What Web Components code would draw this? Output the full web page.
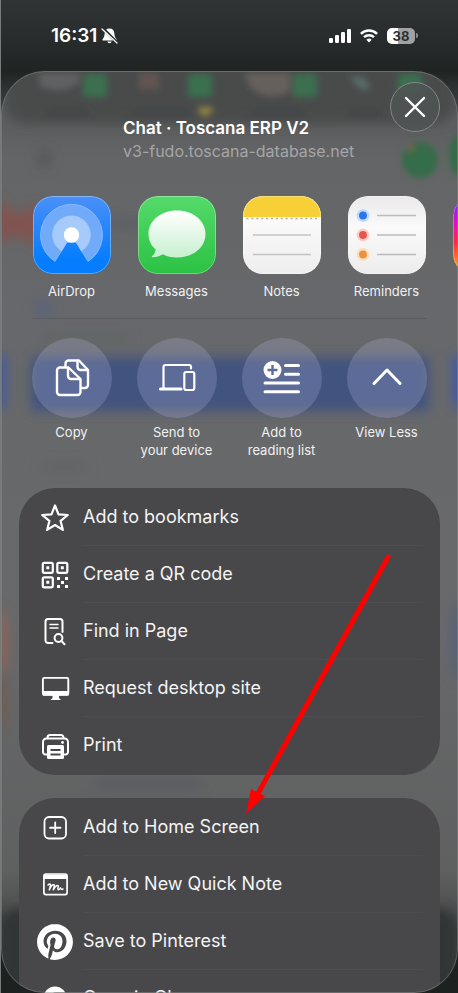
<!DOCTYPE html>
<html lang="en">
<head>
<meta charset="utf-8">
<meta name="viewport" content="width=device-width, initial-scale=1">
<title>Share</title>
<style>
    body {
        margin: 0;
        background: #202524;
        font-family: Inter, Roboto, "Liberation Sans", sans-serif;
        color: #fff;
    }
</style>
</head>
<body>
<phone-screen>
    <status-bar slot="status" time="16:31" battery="38"></status-bar>
    <share-sheet>
        <share-header slot="header" heading="Chat · Toscana ERP V2" address="v3-fudo.toscana-database.net"></share-header>
        <share-row slot="apps">
            <app-tile icon="airdrop">AirDrop</app-tile>
            <app-tile icon="messages">Messages</app-tile>
            <app-tile icon="notes">Notes</app-tile>
            <app-tile icon="reminders">Reminders</app-tile>
            <app-tile icon="camera"></app-tile>
        </share-row>
        <share-row slot="actions">
            <action-button icon="copy">Copy</action-button>
            <action-button icon="devices">Send to<br>your device</action-button>
            <action-button icon="reading">Add to<br>reading list</action-button>
            <action-button icon="chevron">View Less</action-button>
        </share-row>
        <menu-group>
            <menu-item icon="star">Add to bookmarks</menu-item>
            <menu-item icon="qr">Create a QR code</menu-item>
            <menu-item icon="find">Find in Page</menu-item>
            <menu-item icon="desktop">Request desktop site</menu-item>
            <menu-item icon="print">Print</menu-item>
        </menu-group>
        <menu-group>
            <menu-item icon="plus">Add to Home Screen</menu-item>
            <menu-item icon="quicknote">Add to New Quick Note</menu-item>
            <menu-item icon="pinterest">Save to Pinterest</menu-item>
            <menu-item icon="chrome">Open in Chrome</menu-item>
        </menu-group>
    </share-sheet>
    <pointer-arrow slot="overlay"></pointer-arrow>
</phone-screen>

<script>
const ICONS = {
    // menu icons, 40 x 40
    star: [40, `<path d="M20 7.500l3.500 8.800 9.300.7-7.200 5.900 2.300 9-7.900-4.900-7.900 4.900 2.300-9-7.200-5.900 9.300-.7z" fill="none" stroke="#fff" stroke-width="2.200" stroke-linejoin="round"/>`],
    qr: [40, `<g fill="none" stroke="#fff" stroke-width="2.200"><rect x="7.800" y="7.800" width="10" height="10" rx="1.500"/><rect x="22.300" y="7.800" width="10" height="10" rx="1.500"/><rect x="7.800" y="22.300" width="10" height="10" rx="1.500"/></g><path d="M11.300 11.300h3v3h-3zM25.800 11.300h3v3h-3zM11.300 25.800h3v3h-3zM22 22h3v3h-3zM30 22h3v3h-3zM26 26h3v3h-3zM22 30h3v3h-3zM30 30h3v3h-3z" fill="#fff"/>`],
    find: [40, `<g fill="none" stroke="#fff" stroke-width="2" stroke-linecap="round"><path d="M17.500 31H13a2.500 2.500 0 0 1-2.500-2.500V9.500A2.500 2.500 0 0 1 13 7h12a2.500 2.500 0 0 1 2.500 2.500V20"/><path d="M15 12.500h8M15 16h8" stroke-width="1.500"/><circle cx="23.500" cy="26" r="3.900"/><path d="M26.500 29l3 3.200"/></g>`],
    desktop: [40, `<rect x="7.900" y="8.900" width="25.400" height="17" rx="1.500" fill="none" stroke="#fff" stroke-width="1.900"/><path d="M8 22h25.500v4.500H8zM17.500 26h6.500v3l2 2h-10.500l2-2z" fill="#fff"/>`],
    print: [40, `<g fill="none" stroke="#fff" stroke-width="2"><path d="M12.500 12.500v-1a2.500 2.500 0 0 1 2.500-2.500h11a2.500 2.500 0 0 1 2.500 2.500v1"/><path d="M12.500 28.500H10.500a2.500 2.500 0 0 1-2.500-2.500V16a3.500 3.500 0 0 1 3.500-3.500h18A3.500 3.500 0 0 1 33 16v10a2.500 2.500 0 0 1-2.500 2.500h-2"/></g><rect x="12" y="19" width="17" height="14" rx="1.500" fill="#fff"/><path d="M15.500 24h10M15.500 28.500h10" stroke="#48484a" stroke-width="1.800"/><circle cx="27.500" cy="16.500" r="1.400" fill="#fff"/>`],
    plus: [40, `<g fill="none" stroke="#fff" stroke-width="1.800" stroke-linecap="round"><rect x="9.500" y="9" width="21.500" height="21.500" rx="4.500"/><path d="M20.200 14.500v10.500M15 19.750h10.500"/></g>`],
    quicknote: [40, `<rect x="8.900" y="9" width="23.200" height="20.600" rx="2" fill="none" stroke="#fff" stroke-width="1.700"/><path d="M9 9.500h23v4.500H9z" fill="#fff"/><path d="M13 20c1.500-1.500 2.800-1.500 2.500.2L14.300 25c1-2.600 3.200-5.400 4.600-5.200 1.300.2-.5 3.400-.6 5 1.400-2.700 3.300-4.600 4.500-4.400 1.400.2-.7 3.400.3 4.300.9.500 1.700-.9 2.300-1.900.3 1.400 1 1.900 2.600 1.200" fill="none" stroke="#fff" stroke-width="1.500" stroke-linecap="round" stroke-linejoin="round"/>`],
    pinterest: [40, `<path transform="translate(2 2) scale(1.500)" fill="#fff" d="M12.017 0C5.396 0 .029 5.367.029 11.987c0 5.079 3.158 9.417 7.618 11.162-.105-.949-.199-2.403.041-3.439.219-.937 1.406-5.957 1.406-5.957s-.359-.72-.359-1.781c0-1.663.967-2.911 2.168-2.911 1.024 0 1.518.769 1.518 1.688 0 1.029-.653 2.567-.992 3.992-.285 1.193.6 2.165 1.775 2.165 2.128 0 3.768-2.245 3.768-5.487 0-2.861-2.063-4.869-5.008-4.869-3.41 0-5.409 2.562-5.409 5.199 0 1.033.394 2.143.889 2.741.099.12.112.225.085.345-.09.375-.293 1.199-.334 1.363-.053.225-.172.271-.401.165-1.495-.69-2.433-2.878-2.433-4.646 0-3.776 2.748-7.252 7.92-7.252 4.158 0 7.392 2.967 7.392 6.923 0 4.135-2.607 7.462-6.233 7.462-1.214 0-2.354-.629-2.758-1.379l-.749 2.848c-.269 1.045-1.004 2.352-1.498 3.146 1.123.345 2.306.535 3.55.535 6.607 0 11.985-5.365 11.985-11.987C23.97 5.39 18.592.026 11.985.026z"/>`],
    chrome: [40, `<circle cx="20" cy="19" r="11.500" fill="#fff"/><path d="M31 14.500H20a5 5 0 0 0-5 5" fill="none" stroke="#48484a" stroke-width="1.800"/>`],

    // round action icons, 80 x 80
    copy: [80, `<g fill="none" stroke="#fff" stroke-width="2.400" stroke-linejoin="round" stroke-linecap="round"><path d="M33.500 28v-2.500a3 3 0 0 1 3-3H47l9 9.500v15a3 3 0 0 1-3 3H50"/><path d="M45.500 23v6a3 3 0 0 0 3 3h7"/><path d="M36.500 29.500H28a3 3 0 0 0-3 3V54a3 3 0 0 0 3 3h17.500a3 3 0 0 0 3-3V41z"/><path d="M36 30v8a3 3 0 0 0 3 3h9"/></g>`],
    devices: [80, `<g fill="none" stroke="#fff" stroke-width="2.200"><path d="M26.500 50V29a2 2 0 0 1 2-2H52a2 2 0 0 1 2 2v1.500" stroke-linecap="round"/><rect x="47.300" y="34" width="10" height="18" rx="2"/></g><path d="M23.500 51H44" stroke="#fff" stroke-width="3.200" stroke-linecap="round"/>`],
    reading: [80, `<circle cx="30.500" cy="32" r="9" fill="#fff"/><path d="M30.500 27v10M25.500 32h10" stroke="#5f6c95" stroke-width="2.400"/><path d="M43.500 27.500h13M43.500 36.200h13M23 45h33.500M23 53.700h33.500" stroke="#fff" stroke-width="3" stroke-linecap="round"/>`],
    chevron: [80, `<path d="M27 45.500L40 32l13 13.500" fill="none" stroke="#fff" stroke-width="3" stroke-linecap="round" stroke-linejoin="round"/>`],

    // app tiles, 78 x 78
    airdrop: [78, `<defs><linearGradient id="a" x2="0" y2="1"><stop stop-color="#4a90f7"/><stop offset=".8" stop-color="#067dff"/></linearGradient></defs>
        <rect width="78" height="78" fill="url(#a)"/>
        <g stroke="#a6cbff" stroke-width=".6"><path d="M22 65.500A31 31 0 1 1 55 65.500L43 46h-9z" fill="#71aaf8"/>
        <path d="M28.500 55A19 19 0 1 1 48.500 55L43 46h-9z" fill="#a6cafa"/></g><circle cx="38.500" cy="39" r="7.700" fill="#fff"/>`],
    messages: [78, `<defs><linearGradient id="b" x2="0" y2="1"><stop stop-color="#55da6b"/><stop offset="1" stop-color="#2bc244"/></linearGradient><linearGradient id="c" x2="0" y2="1"><stop stop-color="#fff"/><stop offset="1" stop-color="#c8f0cf"/></linearGradient></defs>
        <rect width="78" height="78" fill="url(#b)"/>
        <path d="M39 14.500c16 0 28.500 10 28.500 23.500S55 61.500 39 61.500c-6 0-10-1-14-3.200-3.500 2-7 2.900-10.500 2.900-1 0-1-.6-.3-1.200 2.500-2.200 3.300-4.600 3.400-6.600C13 49.500 10.500 44 10.500 38 10.500 24.500 23 14.500 39 14.500z" fill="url(#c)"/>`],
    notes: [78, `<defs><linearGradient id="d" x2="0" y2="1"><stop stop-color="#fff"/><stop offset="1" stop-color="#eeeeef"/></linearGradient></defs>
        <rect width="78" height="78" fill="url(#d)"/><path d="M0 0h78v21H0z" fill="#f7d038"/>
        <path d="M3.500 22.500h73" stroke="#b5aa8c" stroke-width="1.600" stroke-dasharray="2 2.900"/>
        <path d="M10 39h58M10 58.500h58" stroke="#c3c3c5" stroke-width="1.300"/>`],
    reminders: [78, `<defs><linearGradient id="e" x2="0" y2="1"><stop stop-color="#e9e9ea"/><stop offset=".4" stop-color="#fafafa"/><stop offset="1" stop-color="#ececed"/></linearGradient></defs>
        <rect width="78" height="78" fill="url(#e)"/>
        <g stroke-width="2.500"><circle cx="15" cy="19.500" r="5.200" fill="#2f75e9" stroke="#bcdcff"/><circle cx="15" cy="39" r="5.200" fill="#e7564a" stroke="#fbd0ca"/><circle cx="15" cy="58.500" r="5.200" fill="#ea9142" stroke="#fbdfbd"/></g>
        <path d="M29 19.500h39M29 39h39M29 58.500h39" stroke="#bcbcbe" stroke-width="1.300"/>`],
    camera: [78, `<defs><linearGradient id="f" x2="0" y2="1"><stop offset=".1" stop-color="#7a2cf0"/><stop offset=".35" stop-color="#e70bc4"/><stop offset=".6" stop-color="#ff2a3c"/><stop offset=".9" stop-color="#ff9a10"/></linearGradient></defs>
        <rect width="78" height="78" fill="url(#f)"/>`]
};

class ShadowElement extends HTMLElement {
    connectedCallback() {
        if (!this.shadowRoot) {
            this.attachShadow({ mode: 'open' });
        }
        const template = document.createElement('template');
        template.innerHTML = this.template();
        this.shadowRoot.replaceChildren(template.content.cloneNode(true));
    }
}

class UiIcon extends ShadowElement {
    template() {
        const [size, body] = ICONS[this.getAttribute('name')];
        return `
            <style>
                :host { display: block; flex: none; }
                svg { display: block; }
            </style>
            <svg width="${size}" height="${size}" viewBox="0 0 ${size} ${size}" aria-hidden="true">${body}</svg>
        `;
    }
}

class PhoneScreen extends ShadowElement {
    template() {
        return `
            <style>
                :host {
                    display: flex;
                    flex-direction: column;
                    position: relative;
                    height: 100vh;
                    overflow: hidden;
                    box-sizing: border-box;
                    border-left: 1px solid #777b7c;
                    background: linear-gradient(#303435, #202524 71px, #565a5b 140px, #6a6c6d 400px, #5a5c5d 890px, #1d2221 940px);
                }
            </style>
            <slot name="status"></slot>
            <slot></slot>
            <slot name="overlay"></slot>
        `;
    }
}

class StatusBar extends ShadowElement {
    template() {
        return `
            <style>
                :host {
                    display: flex;
                    align-items: center;
                    flex: none;
                    height: 71px;
                    padding: 0 40px 0 50px;
                    box-sizing: border-box;
                    background: linear-gradient(#303435, #202524);
                }
                .time { font-size: 19px; font-weight: 600; line-height: 24px; }
                .bell { margin-left: 4px; flex: 1; }
                svg { display: block; }
                .right { display: flex; align-items: center; gap: 9px; }
                .battery { display: flex; align-items: center; gap: 1px; }
                .level {
                    width: 28px;
                    border-radius: 5px;
                    background: linear-gradient(90deg, #fff 38%, #a0a2a3 38%);
                    color: #2b2f30;
                    font-size: 13px;
                    font-weight: 700;
                    line-height: 16px;
                    text-align: center;
                }
                .nub { width: 2px; height: 5px; border-radius: 0 2px 2px 0; background: #8b8e8f; }
            </style>
            <span class="time">${this.getAttribute('time')}</span>
            <span class="bell">
                <svg width="18" height="18" viewBox="0 0 18 18">
                    <path d="M8.500 1.500c3 0 4.600 2 4.800 4.600.2 3 .6 4.500 2.200 6.200v1.200H1.500v-1.200c1.600-1.700 2-3.200 2.200-6.200C3.900 3.500 5.500 1.500 8.500 1.500zM6.300 14.500h4.400a2.300 2.300 0 0 1-4.400 0z" fill="#fff"/>
                    <path d="M2 1.500l14.500 14.500" stroke="#262b2b" stroke-width="3"/>
                    <path d="M1 2l15 14" stroke="#fff" stroke-width="1.300" stroke-linecap="round"/>
                </svg>
            </span>
            <div class="right">
                <svg width="22" height="16" viewBox="0 0 22 16" fill="#fff">
                    <rect y="10" width="4" height="5" rx="1.200"/><rect x="6" y="7" width="4" height="8" rx="1.200"/>
                    <rect x="12" y="4" width="4" height="11" rx="1.200"/><rect x="18" y="1" width="4" height="14" rx="1.200"/>
                </svg>
                <svg width="18" height="16" viewBox="0 0 18 16" fill="none" stroke="#fff" stroke-width="2.400">
                    <path d="M.9 5.800a11.600 11.600 0 0 1 16.200 0M4 9.200a7.200 7.200 0 0 1 10 0"/>
                    <path d="M9 14.500l-2.600-2.700a3.700 3.700 0 0 1 5.200 0z" fill="#fff" stroke="none"/>
                </svg>
                <div class="battery"><span class="level">${this.getAttribute('battery')}</span><span class="nub"></span></div>
            </div>
        `;
    }
}

// Page content that shines through the translucent sheet
class SheetBackdrop extends ShadowElement {
    template() {
        return `
            <style>
                :host { display: block; position: absolute; inset: 0; overflow: hidden; }
                svg { display: block; }
            </style>
            <svg width="100%" height="100%" aria-hidden="true">
                <defs>
                    <filter id="soft" x="-30%" y="-30%" width="160%" height="160%"><feGaussianBlur stdDeviation="6"/></filter>
                    <filter id="light" x="-30%" y="-30%" width="160%" height="160%"><feGaussianBlur stdDeviation="3"/></filter>
                </defs>
                <g filter="url(#soft)">
                    <rect x="4" y="-40" width="450" height="93" rx="22" fill="#494b4b"/>
                    <rect x="30" y="286" width="398" height="54" fill="#43537f"/>
                    <rect x="-10" y="284" width="14" height="52" fill="#4058a8"/>
                    <rect x="452" y="284" width="20" height="52" fill="#4058a8"/>
                    <path d="M-6 126l22 18 22-12v44l-22-12-22 8z" fill="#82534f"/>
                    <circle cx="42" cy="238" r="9" fill="#5b647a"/>
                    <circle cx="43" cy="88" r="8" fill="#55575c"/>
                    <ellipse cx="130" cy="152" rx="30" ry="5" fill="#5c5f63"/>
                    <rect x="40" y="264" width="90" height="6" fill="#606364"/>
                    <rect x="40" y="392" width="46" height="8" fill="#616364"/>
                    <rect x="95" y="708" width="105" height="10" fill="#5a5c62"/>
                    <ellipse cx="0" cy="570" rx="4" ry="34" fill="#a4604d"/>
                    <ellipse cx="0" cy="630" rx="4" ry="26" fill="#7d5445"/>
                    <ellipse cx="456" cy="570" rx="6" ry="40" fill="#566077"/>
                    <rect x="-4" y="836" width="462" height="120" rx="22" fill="#323635"/>
                </g>
                <g filter="url(#light)">
                    <path d="M38 2h40v10q-20 14-40 2z" fill="#5e6062"/>
                    <rect x="82" y="3" width="24" height="23" rx="3" fill="#3a7050"/>
                    <rect x="138" y="2" width="20" height="16" fill="#625452"/>
                    <rect x="187" y="3" width="24" height="23" rx="3" fill="#3a7050"/>
                    <path d="M243 2h46v18q-22 12-40-4z" fill="#66605b"/>
                    <rect x="292" y="3" width="24" height="23" rx="3" fill="#3a7050"/>
                    <path d="M348 6h14l8 12h-10z" fill="#58706a"/>
                    <rect x="397" y="3" width="24" height="21" rx="3" fill="#3a7050"/>
                    <path d="M197 37q4-3 7 0 4-3 8 0 0 5-8 9-7-4-7-9z" fill="#948640"/>
                    <path d="M44 42h44M130 42h60M250 42h56M347 42h34" stroke="#434545" stroke-width="6"/>
                    <circle cx="419" cy="89" r="18" fill="#346c49"/>
                    <ellipse cx="457" cy="84" rx="9" ry="20" fill="#346c49"/>
                    <circle cx="410" cy="77" r="3" fill="#80613d"/>
                </g>
            </svg>
        `;
    }
}

class ShareSheet extends ShadowElement {
    template() {
        return `
            <style>
                :host {
                    display: flex;
                    flex-direction: column;
                    flex: 1;
                    min-height: 0;
                    position: relative;
                    overflow: hidden;
                    border-radius: 44px;
                    background: linear-gradient(#515354, #646566 90px, #66686b 240px, #67696a 560px, #5f6060 800px, #454848 860px);
                }
                .content { position: relative; }
                .rule { height: 1px; margin: 18px 31px 19px; background: #5a5c5f; }
                .groups { display: flex; flex-direction: column; gap: 23px; margin: 29px 18px 0; }
                .edge {
                    position: absolute;
                    inset: 0;
                    border: 1px solid #8a8d8e80;
                    border-radius: 44px;
                    pointer-events: none;
                }
            </style>
            <sheet-backdrop></sheet-backdrop>
            <div class="content">
                <slot name="header"></slot>
                <slot name="apps"></slot>
                <div class="rule"></div>
                <slot name="actions"></slot>
                <div class="groups"><slot></slot></div>
            </div>
            <div class="edge"></div>
        `;
    }
}

class ShareHeader extends ShadowElement {
    template() {
        return `
            <style>
                :host {
                    display: flex;
                    align-items: flex-start;
                    justify-content: space-between;
                    height: 125px;
                    padding: 11px 18px 0 122px;
                    box-sizing: border-box;
                    white-space: nowrap;
                }
                .titles { padding-top: 35px; flex: 1; width: 0; }
                h1 { margin: 0; font-size: 17px; font-weight: 600; line-height: 23px; }
                p { margin: 0; font-size: 16px; line-height: 23px; color: #a5a6a8; }
                button {
                    width: 50px;
                    height: 50px;
                    flex: none;
                    padding: 0;
                    border: 1px solid #858889;
                    border-radius: 50%;
                    background: #505355d9;
                }
                svg { display: block; margin: auto; }
            </style>
            <div class="titles">
                <h1>${this.getAttribute('heading')}</h1>
                <p>${this.getAttribute('address')}</p>
            </div>
            <button type="button" aria-label="Close">
                <svg width="22" height="22" viewBox="0 0 22 22"><path d="M2 2l18 18M20 2L2 20" stroke="#fff" stroke-width="2.400" stroke-linecap="round"/></svg>
            </button>
        `;
    }
}

class ShareRow extends ShadowElement {
    template() {
        return `
            <style>
                :host {
                    display: flex;
                    align-items: flex-start;
                    padding-left: 18px;
                    overflow: hidden;
                }
            </style>
            <slot></slot>
        `;
    }
}

class AppTile extends ShadowElement {
    template() {
        return `
            <style>
                :host { display: block; flex: none; width: 105px; }
                button {
                    display: flex;
                    flex-direction: column;
                    align-items: center;
                    gap: 8px;
                    width: 100%;
                    padding: 0;
                    border: 0;
                    background: none;
                    color: #f1f1f2;
                    font: inherit;
                    font-size: 13px;
                    line-height: 18px;
                }
                .tile { position: relative; border-radius: 20px; overflow: hidden; }
                .tile::after {
                    content: "";
                    position: absolute;
                    inset: 0;
                    border: 1px solid #ffffff55;
                    border-radius: 20px;
                }
            </style>
            <button type="button">
                <span class="tile"><ui-icon name="${this.getAttribute('icon')}"></ui-icon></span>
                <slot></slot>
            </button>
        `;
    }
}

class ActionButton extends ShadowElement {
    template() {
        return `
            <style>
                :host { display: block; flex: none; width: 105px; }
                button {
                    display: flex;
                    flex-direction: column;
                    align-items: center;
                    gap: 5px;
                    width: 100%;
                    padding: 0;
                    border: 0;
                    background: none;
                    color: #f1f1f2;
                    font: inherit;
                    font-size: 13px;
                    line-height: 18px;
                }
                .disc { border-radius: 50%; background: #ced6ff30; }
            </style>
            <button type="button">
                <span class="disc"><ui-icon name="${this.getAttribute('icon')}"></ui-icon></span>
                <span><slot></slot></span>
            </button>
        `;
    }
}

class MenuGroup extends ShadowElement {
    template() {
        return `
            <style>
                :host {
                    display: block;
                    padding: 1px 0;
                    border-radius: 36px;
                    background: #48484a;
                }
            </style>
            <slot></slot>
        `;
    }
}

class MenuItem extends ShadowElement {
    template() {
        return `
            <style>
                :host { display: block; --line: #4e4e50; }
                :host(:last-child) { --line: transparent; }
                button {
                    display: flex;
                    align-items: center;
                    gap: 8px;
                    width: 100%;
                    height: 57px;
                    padding: 0 17px 0 16px;
                    border: 0;
                    background: none;
                    color: #f4f4f5;
                    font: inherit;
                    font-size: 18px;
                    text-align: left;
                    white-space: nowrap;
                }
                .label {
                    flex: 1;
                    line-height: 56px;
                    border-bottom: 1px solid var(--line);
                }
            </style>
            <button type="button">
                <ui-icon name="${this.getAttribute('icon')}"></ui-icon>
                <span class="label"><slot></slot></span>
            </button>
        `;
    }
}

class PointerArrow extends ShadowElement {
    template() {
        return `
            <style>
                :host { position: absolute; left: 244px; top: 552px; pointer-events: none; }
                svg { display: block; }
            </style>
            <svg width="150" height="264" viewBox="0 0 150 264" aria-hidden="true">
                <path d="M143 5L10 247" stroke="#f00" stroke-width="5" stroke-linecap="round"/>
                <path d="M1 262L6 237l14 7z" fill="#f00"/>
            </svg>
        `;
    }
}

customElements.define('ui-icon', UiIcon);
customElements.define('sheet-backdrop', SheetBackdrop);
customElements.define('phone-screen', PhoneScreen);
customElements.define('status-bar', StatusBar);
customElements.define('share-sheet', ShareSheet);
customElements.define('share-header', ShareHeader);
customElements.define('share-row', ShareRow);
customElements.define('app-tile', AppTile);
customElements.define('action-button', ActionButton);
customElements.define('menu-group', MenuGroup);
customElements.define('menu-item', MenuItem);
customElements.define('pointer-arrow', PointerArrow);
</script>
</body>
</html>
